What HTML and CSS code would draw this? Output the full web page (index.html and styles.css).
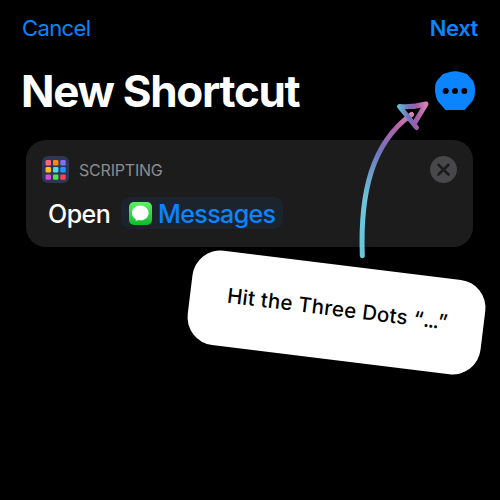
FILE: index.html
```html
<!DOCTYPE html>
<html lang="en">
<head>
<meta charset="utf-8">
<title>New Shortcut</title>
<link rel="stylesheet" href="styles.css">
</head>
<body>
<main class="screen">
  <nav class="nav">
    <span class="cancel">Cancel</span>
    <span class="next">Next</span>
  </nav>
  <header class="header">
    <h1 class="title">New Shortcut</h1>
    <svg class="more" viewBox="0 0 40 39">
      <path fill="#0a84ff" d="M14 1.200Q20-.8 26 1.200L32 3 38 10Q40 13 40 20 40 27 37 30.500L29.500 39H10.500L3 30.500Q0 25 0 18 0 12 2.500 9L8 3Z"/>
      <circle cx="10.700" cy="20" r="3"/><circle cx="20" cy="20" r="3"/><circle cx="29.300" cy="20" r="3"/>
    </svg>
  </header>
  <section class="card">
    <div class="card-head">
      <svg class="grid-icon" viewBox="0 0 27 27">
        <rect width="27" height="27" rx="6" fill="#2f3654"/>
        <rect x="3.600" y="4" width="5.400" height="5.400" rx="1.200" fill="#ff6478"/>
        <rect x="11" y="4" width="5.400" height="5.400" rx="1.200" fill="#ff8a0a"/>
        <rect x="18.300" y="4" width="5.400" height="5.400" rx="1.200" fill="#7c72ee"/>
        <rect x="3.600" y="11" width="5.400" height="5.400" rx="1.200" fill="#ffc012"/>
        <rect x="11" y="11" width="5.400" height="5.400" rx="1.200" fill="#50dce0"/>
        <rect x="18.300" y="11" width="5.400" height="5.400" rx="1.200" fill="#1b98fc"/>
        <rect x="3.600" y="18.400" width="5.400" height="5.400" rx="1.200" fill="#d84ae0"/>
        <rect x="11" y="18.400" width="5.400" height="5.400" rx="1.200" fill="#4ce64c"/>
        <rect x="18.300" y="18.400" width="5.400" height="5.400" rx="1.200" fill="#ff4257"/>
      </svg>
      <span class="category">SCRIPTING</span>
      <svg class="close" viewBox="0 0 27 27">
        <circle cx="13.500" cy="13.500" r="13.400" fill="#48484a"/>
        <path d="M8.500 8.800L18.500 18.500M18.500 8.800L8.500 18.500" stroke="#1c1c1e" stroke-width="2.600" stroke-linecap="round"/>
      </svg>
    </div>
    <div class="action">
      <span class="verb">Open</span>
      <span class="chip">
        <svg class="msg-icon" viewBox="0 0 23 23">
          <defs><linearGradient id="green" x2="0" y2="1"><stop stop-color="#5cf263"/><stop offset="1" stop-color="#0dbd2b"/></linearGradient></defs>
          <rect width="23" height="23" rx="5" fill="url(#green)"/>
          <path fill="#fff" d="M11.300 3.600C6.600 3.600 3 6.900 3 11c0 2.700 1.500 5 3.900 6.200 0 .6-.2 1.200-.6 1.700 1.300 0 2.300-.3 3.200-.8 5.700 1.100 10.100-2.500 10.100-7.100 0-4.100-3.700-7.400-8.300-7.400Z"/>
        </svg>
        <span class="app">Messages</span>
      </span>
    </div>
  </section>
  <svg class="arrow" viewBox="0 0 80 170">
    <defs>
      <linearGradient id="shaft" gradientUnits="userSpaceOnUse" x1="12" y1="160" x2="63" y2="14">
        <stop offset=".38" stop-color="#6cc5da"/><stop offset=".7" stop-color="#7075bd"/><stop offset=".88" stop-color="#b162a9"/><stop offset="1" stop-color="#db82b7"/>
      </linearGradient>
      <linearGradient id="tip" gradientUnits="userSpaceOnUse" x1="48" y1="18" x2="76" y2="17">
        <stop stop-color="#62bfd5"/><stop offset=".4" stop-color="#7470b8"/><stop offset=".68" stop-color="#a45da9"/><stop offset="1" stop-color="#d681b7"/>
      </linearGradient>
    </defs>
    <path class="stroke" stroke="url(#shaft)" d="M12.300 155.700C10 92 22 43 61.500 14.500"/>
    <path class="stroke" stroke="url(#tip)" d="M66.500 27.500L49.500 6.500Q63 7.500 76 4L64 24"/>
  </svg>
  <aside class="callout"><span class="hint">Hit the Three Dots “<span class="dots">...</span>”</span></aside>
</main>
</body>
</html>
```
FILE: styles.css
```css
* { box-sizing: border-box; }
body { margin: 0; background: #000; }
.screen {
  position: relative;
  width: 500px;
  height: 500px;
  overflow: hidden;
  background: #000;
  color: #fff;
  font-family: Inter, sans-serif;
}
.nav {
  display: flex;
  justify-content: space-between;
  padding: 13px 22px 0;
  height: 44px;
  font-size: 22px;
  line-height: 30px;
  color: #0a84ff;
}
.cancel { font-weight: 400; letter-spacing: -.6px; }
.next { font-weight: 600; letter-spacing: -.4px; }
.header {
  display: flex;
  justify-content: space-between;
  padding: 27px 25px 0 21px;
  height: 96px;
}
.title {
  margin: -5px 0 0;
  font-size: 44px;
  line-height: 50px;
  font-weight: 700;
  letter-spacing: -1.3px;
}
.more { width: 40px; height: 39px; }
.card {
  margin: 0 27px 0 26px;
  height: 107px;
  padding: 16px 16px 0;
  border-radius: 20px;
  background: #1c1c1d;
}
.card-head { display: flex; align-items: center; height: 27px; }
.grid-icon, .close { width: 27px; height: 27px; }
.category {
  margin: 0 auto 0 10px;
  font-size: 16px;
  line-height: 20px;
  color: #8c8c8e;
  letter-spacing: -.2px;
}
.action {
  display: flex;
  align-items: center;
  gap: 11px;
  height: 32px;
  margin-top: 14px;
  padding-left: 6px;
  font-size: 25px;
  line-height: 32px;
}
.verb { width: 62px; padding-top: 2px; font-weight: 500; letter-spacing: -.5px; }
.chip {
  display: flex;
  align-items: center;
  gap: 6px;
  width: 162px;
  height: 32px;
  padding-left: 8px;
  border-radius: 9px;
  background: #1b232d;
  color: #0a84ff;
}
.msg-icon { width: 23px; height: 23px; }
.app { padding-top: 2px; font-weight: 500; letter-spacing: -.6px; }
.arrow {
  position: absolute;
  left: 350px;
  top: 100px;
  width: 80px;
  height: 170px;
}
.stroke {
  fill: none;
  stroke-width: 5px;
  stroke-linecap: round;
  stroke-linejoin: round;
}
.callout {
  position: absolute;
  left: 189px;
  top: 264.7px;
  width: 295px;
  height: 95px;
  padding: 29px 0 0 37px;
  border-radius: 28px;
  background: #fff;
  color: #000;
  transform: rotate(7deg);
}
.hint {
  display: block;
  font-size: 20.5px;
  line-height: 30px;
  font-weight: 500;
  letter-spacing: .25px;
  white-space: nowrap;
}
.dots { letter-spacing: -1.4px; }
```
